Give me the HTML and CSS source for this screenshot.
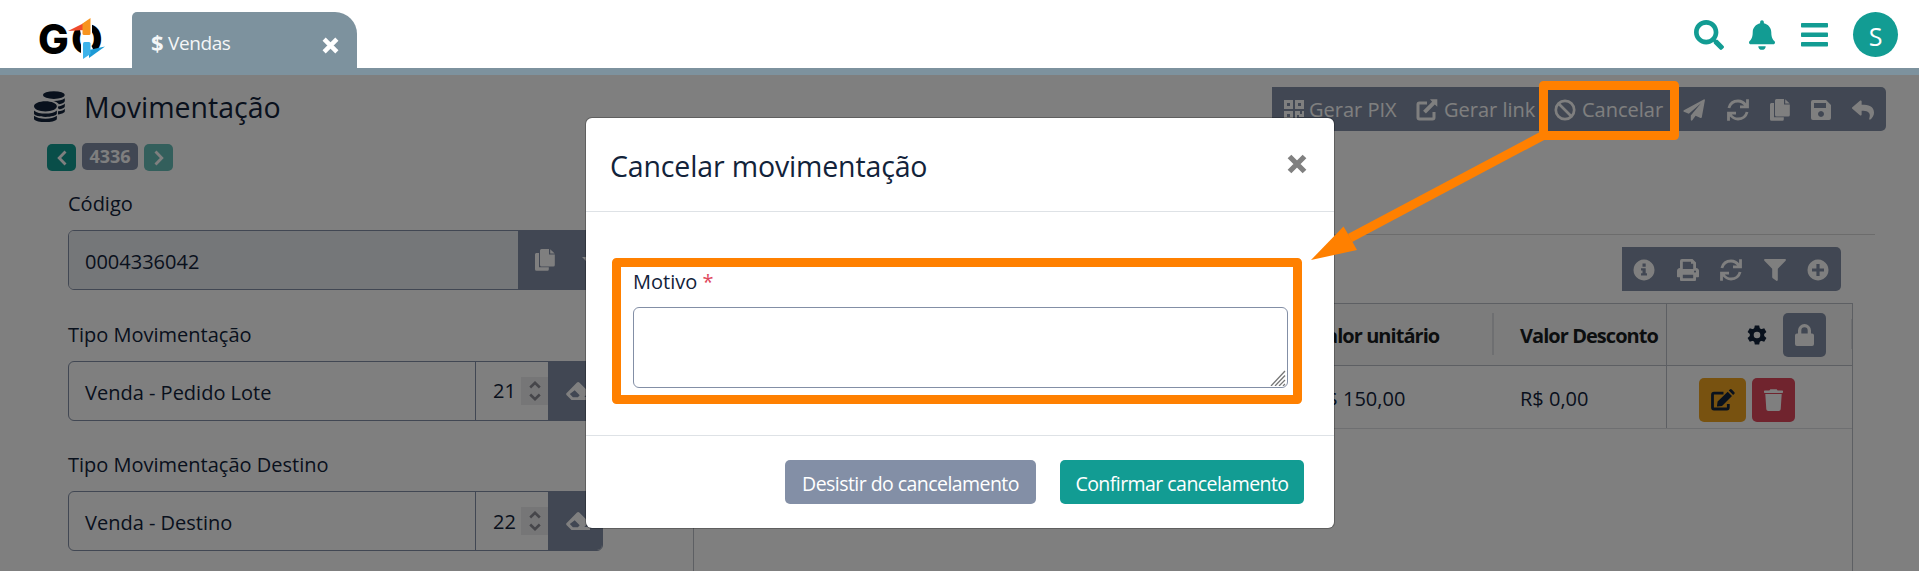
FILE: index.html
```html
<!DOCTYPE html>
<html lang="pt-BR">
<head>
<meta charset="utf-8">
<title>Movimentação</title>
<link rel="stylesheet" href="styles.css">
</head>
<body>
<svg class="sprite" aria-hidden="true">
  <symbol id="i-search" viewBox="0 0 512 512"><path d="M505 442.700L405.300 343c-4.500-4.500-10.600-7-17-7H372c27.600-35.300 44-79.700 44-128C416 93.100 322.900 0 208 0S0 93.100 0 208s93.100 208 208 208c48.300 0 92.700-16.400 128-44v16.300c0 6.400 2.500 12.500 7 17l99.700 99.700c9.400 9.400 24.600 9.400 33.900 0l28.300-28.300c9.400-9.400 9.400-24.600.1-34zM208 336c-70.700 0-128-57.200-128-128 0-70.700 57.200-128 128-128 70.700 0 128 57.200 128 128 0 70.700-57.200 128-128 128z"/></symbol>
  <symbol id="i-bell" viewBox="0 0 448 512"><path d="M224 512c35.320 0 63.970-28.650 63.970-64H160.030c0 35.350 28.650 64 63.970 64zm215.390-149.710c-19.320-20.760-55.470-51.990-55.470-154.290 0-77.700-54.480-139.900-127.940-155.160V32c0-17.670-14.320-32-31.980-32s-31.980 14.330-31.980 32v20.840C118.560 68.100 64.080 130.300 64.080 208c0 102.300-36.150 133.530-55.470 154.290-6 6.450-8.660 14.160-8.610 21.710.11 16.400 12.980 32 32.100 32h383.800c19.120 0 32-15.600 32.100-32 .05-7.550-2.610-15.270-8.610-21.710z"/></symbol>
  <symbol id="i-bars" viewBox="0 0 27 24"><rect y="0" width="27" height="4.500" rx=".8"/><rect y="9.500" width="27" height="4.500" rx=".8"/><rect y="19" width="27" height="4.500" rx=".8"/></symbol>
  <symbol id="i-coins" viewBox="0 0 32 32"><ellipse cx="20.500" cy="4.200" rx="11.300" ry="4"/><path d="M31.800 7.500v2.800c0 1.600-2.600 2.700-6 3.300-1.200-1.500-3.500-2.700-6-3.300 5 .1 9.600-.8 12-2.800zM31.800 12.800v2.900c0 1.400-2 2.500-5 3.100-1 .2-2-.5-2-1.500v-1.200c3.500-.8 6-1.800 7-3.300zM31.800 18.200v2.700c0 1.300-2 2.500-7 3.300v-3.200c3.500-.6 6-1.300 7-2.800zM11.800 10.500c6.500 0 11.800 2.300 11.800 5.300s-5.300 5.300-11.800 5.300S0 18.800 0 15.800s5.300-5.300 11.800-5.300zM0 20c5 4.400 18.600 4.400 23.600 0v3.300c0 4.600-23.600 4.600-23.600 0zM0 25.600c5 4 18.600 4 23.600 0v3c0 4.600-23.600 4.600-23.600 0z"/></symbol>
  <symbol id="i-x" viewBox="0 0 16 16"><path d="M2 2l12 12M14 2L2 14" fill="none" stroke="currentColor" stroke-width="4.200" stroke-linecap="butt"/></symbol>
  <symbol id="i-qr" viewBox="0 0 20 20"><path fill-rule="evenodd" d="M0 0h9v9H0zM3 3v3h3V3zM11 0h9v9h-9zM14 3v3h3V3zM0 11h9v9H0zM3 14v3h3v-3zM11 11h5v3h2v-3h2v6h-5v-2h-2v5h-2zM15 18h2v2h-2zM18 18h2v2h-2z"/></symbol>
  <symbol id="i-ext" viewBox="0 0 22 22"><path d="M11 4H3.500Q2 4 2 5.500v13Q2 20 3.500 20h13q1.500 0 1.500-1.500V13" fill="none" stroke="currentColor" stroke-width="3"/><path d="M14 .3h7.300v7.500l-2.500-2.400-8.900 9-2.800-2.700 9-8.900z"/></symbol>
  <symbol id="i-ban" viewBox="0 0 22 22"><g fill="none" stroke="currentColor" stroke-width="2.700"><circle cx="11" cy="11" r="9.200"/><path d="M4.500 4.500l13 13"/></g></symbol>
  <symbol id="i-plane" viewBox="0 0 22 22"><path d="M21.200.2Q22 .4 21.900 1.200L18.800 18.300q-.3.900-1.200.6l-5-2.100-3.300 4.500q-.9.900-1.500-.4v-4.300L18 4.200 5.800 14.800 1 12.800q-1.200-.7-.1-1.500z"/></symbol>
  <symbol id="i-sync" viewBox="0 0 22 22"><path d="M1.900 9C3.200 4.300 6.800 2 11 2c3.500 0 6 1.800 8 4.500M20.100 13c-1.300 4.700-4.900 7-9.100 7-3.500 0-6-1.800-8-4.500M20.500.3v7.500H13M1.500 21.700v-7.500H9" fill="none" stroke="currentColor" stroke-width="2.800"/></symbol>
  <symbol id="i-copy" viewBox="0 0 20 22"><path d="M6.500 0H14v5.500h5.800V16q0 1.500-1.500 1.500H6.500Q5 17.500 5 16V1.500Q5 0 6.500 0z"/><path d="M15.200.2l4.500 4.200h-4.500zM1.300 4H4v14.300h9.800v2q0 1.500-1.300 1.500H1.500Q0 21.800 0 20.300V5.500Q0 4 1.300 4z"/></symbol>
  <symbol id="i-save" viewBox="0 0 20 20"><path fill-rule="evenodd" d="M2 0h13l5 5v13q0 2-2 2H2q-2 0-2-2V2q0-2 2-2zM3 3v5h12V3zM10 11a3 3 0 1 0 .01 0z"/></symbol>
  <symbol id="i-reply" viewBox="0 0 512 512"><path d="M8.309 189.836L184.313 37.851C199.719 24.546 224 35.347 224 56.015v80.053c160.629 1.839 288 34.032 288 186.258 0 61.441-39.581 122.309-83.333 154.132-13.653 9.931-33.111-2.533-28.077-18.631 45.344-145.012-21.507-183.510-176.590-185.742V360c0 20.700-24.300 31.453-39.687 18.164l-176.004-152c-11.071-9.562-11.086-26.753 0-36.328z"/></symbol>
  <symbol id="i-info" viewBox="0 0 22 22"><path fill-rule="evenodd" d="M11 .5a10.500 10.500 0 1 0 .01 0zM9.500 4.500h3.200v3.200H9.500zM8 9.300h4.700v4.900H14v2.300H8v-2.300h1.500v-2.600H8z"/></symbol>
  <symbol id="i-print" viewBox="0 0 22 22"><path fill-rule="evenodd" d="M5 0h10.500L19 3.500V9q3 .4 3 3v5.500q0 .8-.8.800H19V21q0 1-1 1H4q-1 0-1-1v-2.700H.8q-.8 0-.8-.8V12q0-2.600 3-3V2q0-2 2-2zM5.800 2.800V10h10.400V4.800H14V2.800zM5.800 15.800v3.500h10.400v-3.500zM18 11.500a1 1 0 1 0 .01 0z"/></symbol>
  <symbol id="i-filter" viewBox="0 0 22 22"><path d="M1 0h20q1.500.3.600 1.700L13.800 9.800V21q-.4 1.300-1.500.8l-3.500-2.600q-.6-.4-.6-1.200V9.800L.4 1.700Q-.5.300 1 0z"/></symbol>
  <symbol id="i-plus" viewBox="0 0 22 22"><path fill-rule="evenodd" d="M11 .5a10.500 10.500 0 1 0 .01 0zM9.400 5h3.200v4.400H17v3.200h-4.400V17H9.400v-4.400H5V9.400h4.400z"/></symbol>
  <symbol id="i-gear" viewBox="-10 -10 20 20"><circle r="5.300" fill="none" stroke="currentColor" stroke-width="4"/><path d="M-2.200-9.600h4.400l.8 4h-6zM-2.200 9.600h4.400l.8-4h-6z"/><path transform="rotate(60)" d="M-2.200-9.600h4.400l.8 4h-6zM-2.200 9.600h4.400l.8-4h-6z"/><path transform="rotate(120)" d="M-2.200-9.600h4.400l.8 4h-6zM-2.200 9.600h4.400l.8-4h-6z"/></symbol>
  <symbol id="i-lock" viewBox="0 0 19 22"><path fill-rule="evenodd" d="M2 9.500h1V6.500a6.500 6.500 0 0 1 13 0v3h1q2 0 2 2V20q0 2-2 2H2q-2 0-2-2v-8.500q0-2 2-2zM6.300 9.500h6.400v-3a3.200 3.200 0 0 0-6.400 0z"/></symbol>
  <symbol id="i-edit" viewBox="0 0 24 22"><path d="M12.500 4.200H3Q1.500 4.200 1.500 5.700V18.500Q1.500 20 3 20h12.800q1.500 0 1.500-1.500V15" fill="none" stroke="currentColor" stroke-width="2.800"/><path d="M16.700 2.700l4.300 4.300-10 9.900-4.400.6q-.7 0-.6-.7l.6-4.300zM17.800 1.600l1-1q1-1 2 0l2.400 2.400q1 1 0 2l-1.100 1z"/></symbol>
  <symbol id="i-trash" viewBox="0 0 19 22"><path d="M1.300 5h16.400l-1 15.200q-.2 1.800-2 1.800H4.300q-1.800 0-2-1.800zM.7 1.400h4.700L6.300.2h6.400l.9 1.200h4.700q.7 0 .7.7v1.200q0 .7-.7.700H.7Q0 4 0 3.300V2.100q0-.7.700-.7z"/></symbol>
  <symbol id="i-eraser" viewBox="0 0 24 18"><path fill-rule="evenodd" d="M11 .6q1.200-1 2.300 0l8.500 8.500q1 1.100 0 2.200L18.300 15H24v3H5.500L.7 13.200q-1.200-1.100 0-2.200zM3.800 12l3.100 3.200h5l1.800-1.900-5-5z"/></symbol>
  <symbol id="i-spin" viewBox="0 0 12 20"><path d="M1.200 6.500L6 1.800l4.800 4.700M1.200 13.500L6 18.200l4.800-4.700" fill="none" stroke="#8c8c94" stroke-width="2.600"/></symbol>
  <symbol id="i-left" viewBox="0 0 10 16"><path d="M8.500 1.500L2.200 8l6.300 6.500" fill="none" stroke="currentColor" stroke-width="2.800"/></symbol>
  <symbol id="i-right" viewBox="0 0 10 16"><path d="M1.500 1.500L7.800 8l-6.300 6.500" fill="none" stroke="currentColor" stroke-width="2.800"/></symbol>
</svg>

<header class="topbar">
  <div class="logo">
    <span class="logo-g">G</span><span class="logo-g">O</span>
    <svg class="logo-mark" viewBox="0 0 68 44" width="68" height="44">
      <path d="M41 8l4-4h9v14H43zM43 26h9l4 8-4 7h-9z" fill="#fff"/>
      <path d="M30 14l17-8.500V13z" fill="#ef4a2c"/>
      <path d="M44.500 6.500L52.500 1v15.500q0 1.500-1.500 1.500h-5q-1.500 0-1.500-1.500z" fill="#f7941f"/>
      <path d="M67 29.500L51 41v-8z" fill="#1c9ad6"/>
      <path d="M45 26.500q0-1.500 1.500-1.500H51q1.500 0 1.500 1.500v10.500L45 42z" fill="#3eb3ea"/>
    </svg>
  </div>
  <div class="tab"><b class="dollar">$</b><span class="tab-name">Vendas</span><svg class="tab-x"><use href="#i-x"/></svg></div>
  <div class="top-actions">
    <svg class="a-search"><use href="#i-search"/></svg>
    <svg class="a-bell"><use href="#i-bell"/></svg>
    <svg class="a-bars"><use href="#i-bars"/></svg>
    <span class="avatar">S</span>
  </div>
</header>

<main class="page">
  <section class="left">
    <h1 class="title"><svg class="coins"><use href="#i-coins"/></svg><span>Movimentação</span></h1>
    <div class="pager">
      <span class="pg"><svg><use href="#i-left"/></svg></span><span class="pg-num">4336</span><span class="pg pg-off"><svg><use href="#i-right"/></svg></span>
    </div>
    <div class="field">
      <label>Código</label>
      <div class="group"><span class="val ro">0004336042</span><span class="addon addon-copy"><svg class="ic-copy"><use href="#i-copy"/></svg><i class="caret"></i></span></div>
    </div>
    <div class="field">
      <label>Tipo Movimentação</label>
      <div class="group"><span class="val">Venda - Pedido Lote</span><span class="num">21<i class="spin"><svg><use href="#i-spin"/></svg></i></span><span class="addon"><svg class="ic-er"><use href="#i-eraser"/></svg></span></div>
    </div>
    <div class="field">
      <label>Tipo Movimentação Destino</label>
      <div class="group"><span class="val">Venda - Destino</span><span class="num">22<i class="spin"><svg><use href="#i-spin"/></svg></i></span><span class="addon"><svg class="ic-er"><use href="#i-eraser"/></svg></span></div>
    </div>
  </section>

  <section class="right">
    <nav class="toolbar">
      <span class="tb tb-pix"><svg class="s20"><use href="#i-qr"/></svg><span>Gerar PIX</span></span>
      <span class="tb tb-link"><svg><use href="#i-ext"/></svg><span>Gerar link</span></span>
      <span class="tb tb-cancel"><svg><use href="#i-ban"/></svg><span>Cancelar</span></span>
      <span class="tbi"><svg><use href="#i-plane"/></svg></span>
      <span class="tbi"><svg><use href="#i-sync"/></svg></span>
      <span class="tbi tbi-n"><svg class="ic-copy"><use href="#i-copy"/></svg></span>
      <span class="tbi tbi-n"><svg class="s20"><use href="#i-save"/></svg></span>
      <span class="tbi tbi-last"><svg><use href="#i-reply"/></svg></span>
    </nav>
    <hr class="rule">
    <nav class="toolbar toolbar-grid">
      <span class="tbi"><svg><use href="#i-info"/></svg></span>
      <span class="tbi"><svg><use href="#i-print"/></svg></span>
      <span class="tbi"><svg><use href="#i-sync"/></svg></span>
      <span class="tbi"><svg><use href="#i-filter"/></svg></span>
      <span class="tbi tbi-last"><svg><use href="#i-plus"/></svg></span>
    </nav>
    <div class="grid">
      <div class="row row-head">
        <div class="cell c-unit"><span>Valor unitário</span><i class="handle"></i></div>
        <div class="cell c-desc">Valor Desconto</div>
        <div class="cell c-act"><svg class="gear"><use href="#i-gear"/></svg><span class="btn-sq lock"><svg><use href="#i-lock"/></svg></span><i class="handle-r"></i></div>
      </div>
      <div class="row">
        <div class="cell c-unit">R$ 150,00</div>
        <div class="cell c-desc">R$ 0,00</div>
        <div class="cell c-act c-btns"><span class="btn-sq edit"><svg><use href="#i-edit"/></svg></span><span class="btn-sq del"><svg><use href="#i-trash"/></svg></span></div>
      </div>
    </div>
  </section>
</main>

<div class="backdrop">
  <div class="modal" role="dialog">
    <div class="m-head"><h2>Cancelar movimentação</h2><svg class="m-x"><use href="#i-x"/></svg></div>
    <div class="m-body">
      <label>Motivo <em>*</em></label>
      <div class="area"><svg viewBox="0 0 16 16"><path d="M1 16L15 1M5 16L15 5.500M9 16l6-6M13 16l2-2" stroke="#777" stroke-width="1.300" fill="none"/></svg></div>
    </div>
    <div class="m-foot"><button class="btn b-no">Desistir do cancelamento</button><button class="btn b-ok">Confirmar cancelamento</button></div>
  </div>
</div>

<svg class="marks" viewBox="0 0 1919 571" width="1919" height="571">
  <g fill="none" stroke="#ff8000" stroke-width="9" stroke-linejoin="round">
    <path d="M1543.500 85.500h131v50h-131zM616.500 262.500h681v137h-681z"/>
    <path d="M1543 135.500L1350 238"/>
  </g>
  <path d="M1311 260L1343.500 226.500 1348 234 1352.500 242 1357 250z" fill="#ff8000"/>
</svg>
</body>
</html>
```
FILE: styles.css
```css
* { box-sizing: border-box; }
body {
  margin: 0;
  width: 1919px;
  height: 571px;
  overflow: hidden;
  position: relative;
  background: #fff;
  color: #12233a;
  font-family: "Open Sans", "Noto Sans", sans-serif;
  font-size: 20px;
  line-height: 28px;
  letter-spacing: 0;
}
svg { display: block; flex: none; fill: currentColor; }
h1, h2 { margin: 0; font-weight: 400; }
.sprite { position: absolute; width: 0; height: 0; }

/* top bar */
.topbar {
  display: flex;
  align-items: flex-start;
  height: 75px;
  padding: 12px 21px 0 38px;
  border-bottom: 7px solid #7d929e;
}
.logo { position: relative; display: flex; width: 68px; height: 44px; margin: 5px 26px 0 0; color: #000; }
.logo-g { width: 33px; font: 800 41px/44px Inter, sans-serif; letter-spacing: 0; }
.logo-mark { position: absolute; left: 0; top: 0; }
.tab {
  display: flex;
  align-items: center;
  width: 225px;
  height: 56px;
  padding: 0 18px 0 19px;
  border-radius: 5px 22px 0 0;
  background: #7d929e;
  color: #f4f6f7;
}
.dollar { width: 17px; font-size: 22px; margin-top: 3px; }
.tab-name { margin-top: 6px; font-size: 19px; letter-spacing: -0.4px; }
.tab-x { width: 17px; height: 17px; margin: 10px 0 0 auto; color: #fff; }
.top-actions { display: flex; align-items: center; margin-left: auto; color: #129c93; height: 45px; }
.a-search { width: 30px; height: 30px; margin-right: 25px; }
.a-bell { width: 26px; height: 30px; margin-right: 26px; }
.a-bars { width: 27px; height: 24px; margin-right: 25px; }
.avatar {
  width: 45px;
  height: 45px;
  border-radius: 50%;
  background: #129c93;
  color: #fff;
  font-size: 25px;
  line-height: 48px;
  text-align: center;
}

/* page */
.page { display: flex; height: 496px; overflow: hidden; }
.left { flex: none; width: 693px; padding: 12px 0 0 34px; }
.title { display: flex; align-items: center; height: 40px; font-size: 28.500px; letter-spacing: 0; }
.coins { width: 31px; height: 31px; margin: -2px 19px 0 0; }
.pager { display: flex; align-items: center; gap: 6px; margin: 16px 0 0 13px; height: 28px; color: #fff; }
.pg {
  display: flex;
  align-items: center;
  justify-content: center;
  width: 29px;
  height: 27px;
  margin-top: 1px;
  border-radius: 5px;
  background: #129c93;
}
.pg svg { width: 10px; height: 16px; }
.pg-off { background: #66bfb8; }
.pg-num {
  width: 56px;
  height: 27px;
  margin-top: -1px;
  border-radius: 5px;
  background: #838fa6;
  font-weight: 700;
  font-size: 18px;
  line-height: 27px;
  text-align: center;
}
.field { width: 535px; height: 130.600px; margin-left: 34px; padding-top: 18px; }
.field label { display: block; height: 41px; line-height: 30px; }
.group { display: flex; height: 60px; border: 1px solid #838fa6; border-radius: 6px; overflow: hidden; }
.val { flex: 1; padding-left: 16px; line-height: 61px; }
.ro { background: #ebeef2; }
.num {
  display: flex;
  align-items: center;
  width: 73px;
  padding-left: 17px;
  border-left: 1px solid #838fa6;
  line-height: 61px;
}
.spin { display: flex; align-items: center; justify-content: center; width: 27px; height: 28px; margin-left: auto; background: #ececef; }
.spin svg { width: 12px; height: 20px; }
.addon { display: flex; align-items: center; width: 54px; padding-left: 18px; background: #838fa6; color: #fff; }
.addon-copy { width: 84px; padding-left: 17px; }
.ic-er { width: 24px; height: 18px; }
.caret { margin: 0 0 0 27px; border: 6px solid transparent; border-top-color: #fff; border-bottom: 0; }

.right { flex: none; width: 1226px; padding-top: 12px; }
.toolbar {
  display: flex;
  align-items: center;
  width: 614px;
  height: 44px;
  margin-left: 579px;
  padding: 2px 0 0 12px;
  border-radius: 0 5px 5px 0;
  background: #838fa6;
  color: #fff;
}
.toolbar svg { width: 22px; height: 22px; }
.toolbar .s20 { width: 20px; height: 20px; }
.toolbar .ic-copy, .ic-copy { width: 20px; height: 22px; }
.tb { flex: none; display: flex; align-items: center; gap: 6px; }
.tb-pix { width: 132px; gap: 5px; }
.tb-link { width: 138px; }
.tb-cancel { width: 129px; }
.tbi { flex: none; width: 43.600px; display: flex; }
.tbi-n { width: 41px; }
.tbi-last { width: 22px; }
.rule { width: 1182px; height: 1px; margin: 103px 0 12px 0; border: 0; background: #d8d8d8; }
.toolbar-grid { width: 219px; margin-left: 929px; padding-left: 11px; }
.grid { width: 1160px; height: 268px; margin-top: 12px; border: 1px solid #babfc7; border-bottom: 0; }
.row { display: flex; height: 63px; border-bottom: 1px solid #dcdfe2; }
.row-head { height: 62px; background: #f8f8f8; border-color: #babfc7; font-weight: 700; color: #181d1f; }
.cell { display: flex; align-items: center; position: relative; padding-top: 3px; }
.c-unit { width: 800px; padding-left: 620px; }
.c-desc { width: 173px; padding-left: 26px; border-right: 1px solid #babfc7; }
.row-head .cell { letter-spacing: -0.95px; white-space: nowrap; }
.handle { position: absolute; right: 0; top: 9px; width: 2px; height: 42px; background: #dddfe2; }
.handle-r { position: absolute; right: 0; top: 15px; width: 1px; height: 30px; background: #dddfe2; }
.row-head .c-act { flex: 1; padding: 0 0 0 80px; }
.gear { width: 20px; height: 20px; color: #12233a; }
.btn-sq { display: flex; align-items: center; justify-content: center; width: 43px; height: 44px; border-radius: 5px; color: #fff; }
.lock { margin-left: 16px; background: #838fa6; }
.lock svg, .del svg { width: 19px; height: 22px; }
.c-btns { padding-left: 32px; gap: 6px; }
.edit { width: 47px; margin: 3px 0 0; background: #f1a521; color: #12233a; }
.edit svg { width: 24px; height: 22px; }
.del { margin: 3px 0 0; background: #e0485c; }

/* dialog */
.backdrop { position: absolute; left: 0; top: 75px; width: 1919px; height: 496px; background: rgba(0, 0, 0, .5); }
.modal {
  width: 748px;
  height: 410px;
  margin: 43px 0 0 586px;
  border-radius: 6px;
  background: #fff;
  box-shadow: 0 0 0 1px rgba(0, 0, 0, .25);
}
.m-head { display: flex; height: 94px; padding: 34px 27px 0 24px; border-bottom: 1px solid #dee2e6; }
.m-head h2 { font-size: 28.500px; line-height: 28px; letter-spacing: -0.15px; }
.m-x { width: 20px; height: 20px; margin: 2px 0 0 auto; color: #808080; }
.m-body { height: 223px; padding: 49px 46px 0 47px; }
.m-body label { display: block; height: 46px; line-height: 41px; }
.m-body em { color: #e0485c; font-style: normal; }
.area {
  display: flex;
  align-items: flex-end;
  justify-content: flex-end;
  height: 81px;
  padding: 0 1px 1px 0;
  border: 1px solid #838fa6;
  border-radius: 6px;
}
.area svg { width: 16px; height: 16px; }
.m-foot { display: flex; justify-content: flex-end; gap: 24px; height: 93px; padding: 24px 30px 0 0; border-top: 1px solid #dee2e6; }
.btn { height: 44px; padding: 3px 0 0; border: 0; border-radius: 5px; color: #fff; font: inherit; font-size: 19.500px; letter-spacing: -0.55px; }
.b-no { width: 251px; background: #838fa6; }
.b-ok { width: 244px; background: #129c93; }

.marks { position: absolute; left: 0; top: 0; }
```
